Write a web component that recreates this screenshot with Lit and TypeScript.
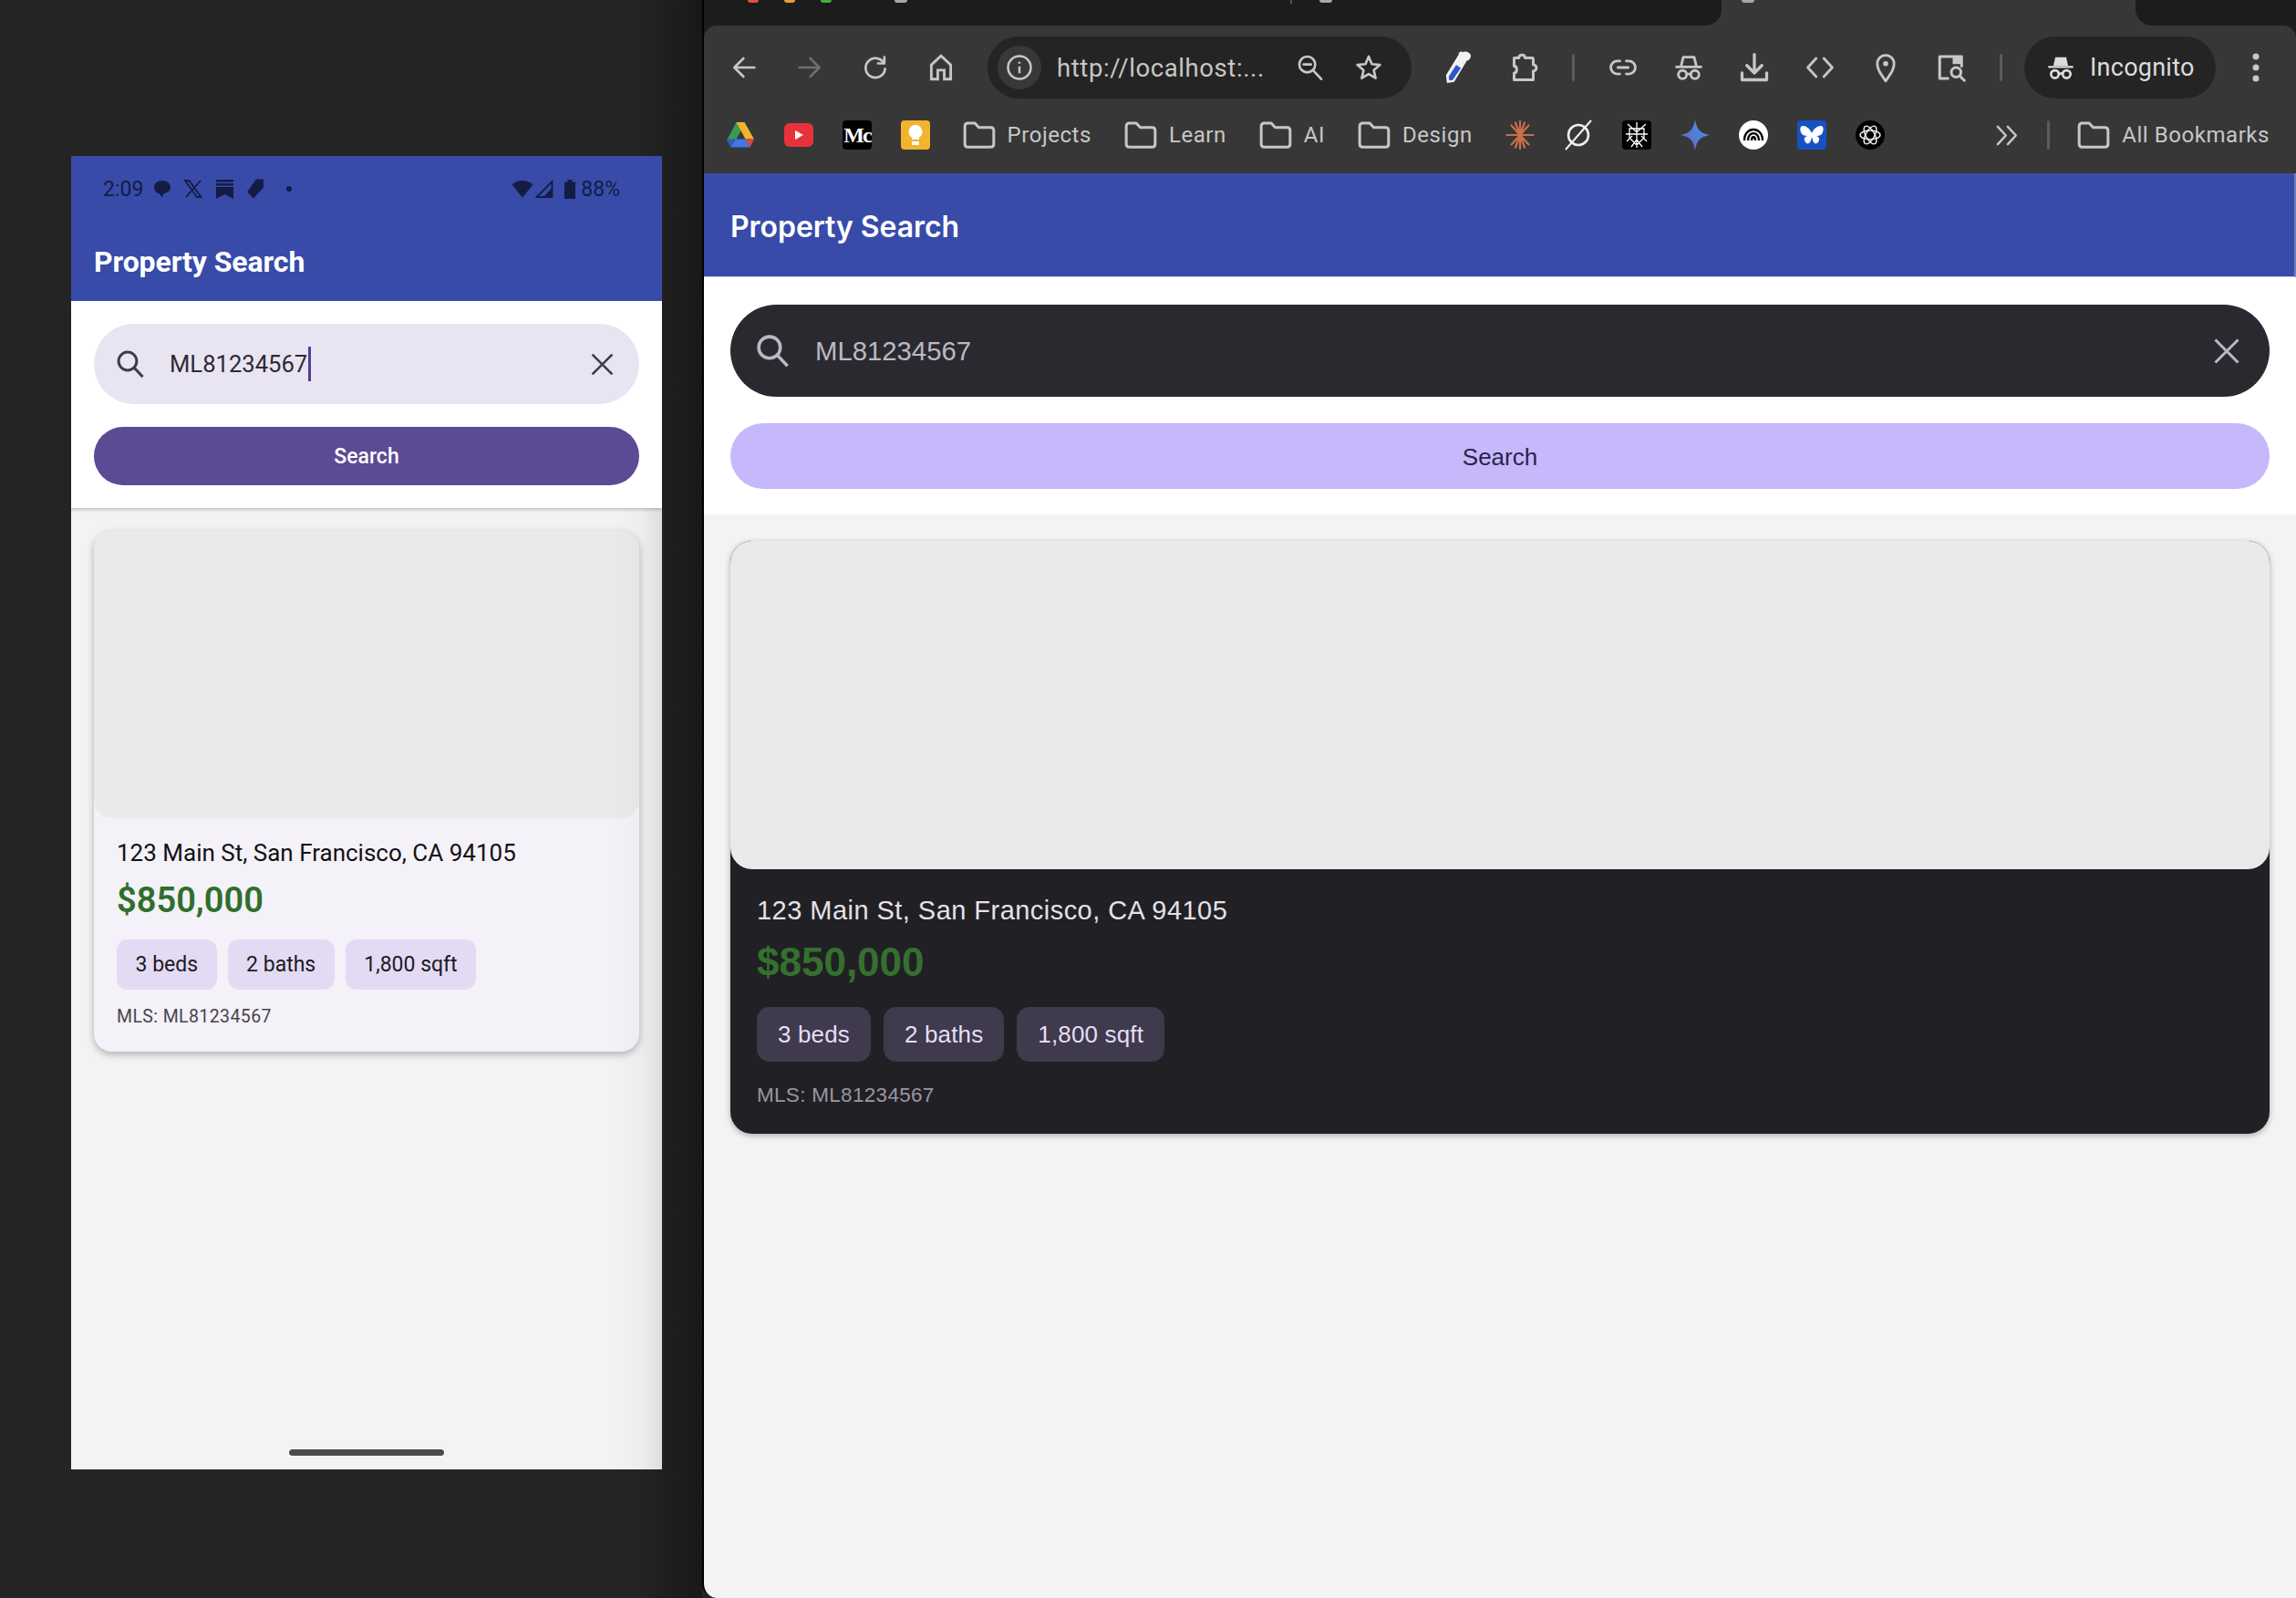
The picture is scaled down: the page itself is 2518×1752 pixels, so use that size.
import { LitElement, html, css, svg } from "lit";
import { customElement } from "lit/decorators.js";

const ic = (size: number, body: unknown, cls = "") =>
  html`<svg class=${cls} width=${size} height=${size} viewBox="0 0 24 24" fill="none" stroke="currentColor" stroke-width="2" stroke-linecap="round" stroke-linejoin="round">${body}</svg>`;

const searchGlyph = svg`<circle cx="10" cy="10" r="6.6"/><path d="M15 15l6 6.4" stroke-linecap="butt"/>`;
const closeGlyph = svg`<path d="M4.5 4.5l15 15M19.5 4.5l-15 15" stroke-linecap="butt" stroke-width="1.8"/>`;
const folderGlyph = svg`<path d="M2.5 6.2c0-1.2.8-2 2-2h4.6l2.6 2.8h7.800c1.200 0 2 .8 2 2v9c0 1.200-.8 2-2 2h-15c-1.200 0-2-.8-2-2z" stroke-width="1.800"/>`;

const chrome = {
  back: svg`<path d="M20.5 12H4.5M11.5 4.5L4 12l7.5 7.5"/>`,
  forward: svg`<path d="M3.5 12h16M12.5 4.5L20 12l-7.5 7.5"/>`,
  reload: svg`<path d="M19 8.4A8 8 0 1 0 20 13"/><path d="M19.4 3.4v5.2h-5.2"/>`,
  home: svg`<path d="M4.500 21V10L12 3l7.500 7v11h-5v-7h-5v7z" stroke-linejoin="miter"/>`,
  zoom: svg`<circle cx="9.500" cy="9.500" r="6.500"/><path d="M14.500 14.500l6.500 7M6.500 9.500h6"/>`,
  star: svg`<path d="M12 3l2.600 6.200 6.700.6-5.100 4.400 1.500 6.600L12 17.300 6.300 20.800l1.500-6.600-5.100-4.400 6.700-.6z"/>`,
  puzzle: svg`<path d="M5 5h3.500c0-3 4.500-3 4.500 0H18c.6 0 1 .4 1 1v4c3 0 3 4.500 0 4.500V21H5v-5c2.500 0 2.500-5 0-5z"/>`,
  link: svg`<path d="M9.500 7H7.500a5 5 0 0 0 0 10h2M14.500 7h2a5 5 0 0 1 0 10h-2M8 12h8"/>`,
  incog: svg`<path d="M2.500 11.500h19" stroke-width="1.800"/><path d="M6 10.500L7.500 3.500h9l1.500 7z" fill="currentColor" stroke="none"/><circle cx="7.200" cy="17.500" r="3.200"/><circle cx="16.800" cy="17.500" r="3.200"/><path d="M10.400 17h3.200"/>`,
  incogHollow: svg`<path d="M2.500 11.500h19"/><path d="M6.200 10.500L7.800 4h8.400l1.600 6.500" /><circle cx="7.200" cy="17.500" r="3.200"/><circle cx="16.800" cy="17.500" r="3.200"/><path d="M10.400 17h3.200"/>`,
  download: svg`<path d="M12 2.500v13M6.500 10.500L12 16l5.500-5.500" stroke-width="2.200"/><path d="M3 16v5h18v-5" stroke-width="2.200"/>`,
  code: svg`<path d="M9 5l-6.500 7L9 19M15 5l6.500 7L15 19"/>`,
  pin: svg`<path d="M12 22.500C8 16.500 5.500 13.500 5.500 9a6.500 6.500 0 0 1 13 0c0 4.500-2.500 7.500-6.500 13.500z"/><circle cx="12" cy="9" r="2" fill="currentColor" stroke="none"/>`,
  lens: svg`<path d="M9.500 20H3.500V4h16v7"/><path d="M13 4h6.500v5.500H13z" fill="currentColor" stroke="none"/><circle cx="15.500" cy="15.500" r="3.500"/><path d="M18 18l3.500 3.500"/>`,
};

@customElement("app-root")
export class AppRoot extends LitElement {
  static styles = css`
    :host { display: block; }
    * { box-sizing: border-box; }
    .root { display: flex; width: 2518px; height: 1752px; overflow: hidden; background: #242424; }

    /* phone */
    .phone-col { width: 770px; flex: none; padding: 171px 0 0 78px; background: linear-gradient(90deg, #242424 640px, #242424 700px, #181818 770px); }
    .phone { position: relative; width: 648px; height: 1440px; display: flex; flex-direction: column; background: #f3f3f3; font-family: Roboto, sans-serif; }
    .phone::after { content: ""; position: absolute; top: 160px; right: 0; bottom: 0; width: 60px; pointer-events: none; background: linear-gradient(90deg, rgba(0,0,0,0) 0, rgba(0,0,0,.02) 60%, rgba(0,0,0,.09) 100%); }
    .p-head { height: 159px; flex: none; background: #384ba8; }
    .status { height: 72px; display: flex; align-items: center; padding: 0 46px 0 35px; color: #141c44; font-size: 23px; }
    .st-left { display: flex; align-items: center; }
    .st-time { margin-right: 11px; }
    .st-left svg { margin-right: 13px; }
    .st-dot { width: 6px; height: 6px; border-radius: 50%; background: #141c44; margin-left: 11px; }
    .st-right { display: flex; align-items: center; margin-left: auto; gap: 2px; }
    .st-batt { margin-left: 9px; }
    .st-pct { margin-left: 3px; }
    .p-title { padding-left: 25px; font-size: 32px; line-height: 89px; font-weight: 700; letter-spacing: -.1px; color: #fff; }
    .p-top { flex: none; background: #fff; padding: 25px; display: flex; flex-direction: column; gap: 25px; box-shadow: 0 2px 3px rgba(0,0,0,.2); position: relative; z-index: 1; }
    .p-pill { height: 88px; border-radius: 44px; background: #e9e4f2; display: flex; align-items: center; padding: 0 23px 0 22px; color: #3f3c46; }
    .p-val { margin-left: 25px; font-size: 25.600px; color: #2d2a33; }
    .caret { width: 3px; height: 38px; margin-left: 1px; background: #4f3f94; }
    .p-pill .end { margin-left: auto; display: flex; }
    .p-btn { height: 64px; border-radius: 32px; background: #5b4a94; color: #fff; display: flex; align-items: center; justify-content: center; font-size: 23px; font-weight: 500; }
    .p-main { flex: 1; padding: 25px 25px 0; display: flex; flex-direction: column; }
    .p-card { border-radius: 20px; background: #f4f1f9; box-shadow: 0 3px 8px rgba(0,0,0,.28); height: 571px; }
    .p-img { height: 315px; border-radius: 20px; background: #eaeaea; }
    .p-body { padding: 19px 25px 0; }
    .p-addr { font-size: 26px; line-height: 38px; color: #111; }
    .p-price { margin-top: 7px; font-size: 38px; line-height: 52px; font-weight: 600; color: #2f6f2c; }
    .p-chips { display: flex; gap: 12px; margin-top: 17px; }
    .p-chip { height: 55px; display: flex; align-items: center; padding: 0 20.500px; border-radius: 12px; background: #e3daf4; font-size: 23px; color: #1c1a22; }
    .p-mls { margin-top: 16px; font-size: 19.500px; line-height: 28px; letter-spacing: .4px; color: #47444c; }
    .home-bar { margin: auto auto 15px; width: 170px; height: 7px; border-radius: 4px; background: #4b4b4b; box-shadow: 0 0 0 1px #fff; flex: none; }

    /* browser */
    .browser { flex: 1; display: flex; flex-direction: column; border-left: 2px solid #000; border-bottom-left-radius: 16px; overflow: hidden; background: #f3f3f3; font-family: "Liberation Sans", sans-serif; }
    .chrome { flex: none; height: 190px; background: #1c1c1c; font-family: Roboto, sans-serif; color: #c7c7c7; }
    .strip { height: 28px; display: flex; background: #373737; }
    .strip-l { width: 1116px; background: #1c1c1c; border-bottom-right-radius: 18px; display: flex; }
    .strip-r { margin-left: auto; width: 176px; background: #1c1c1c; border-bottom-left-radius: 18px; }
    .lights { display: flex; gap: 28px; margin-left: 48px; }
    .light { width: 12px; height: 3px; border-radius: 0 0 6px 6px; }
    .l-red { background: #e0503f; }
    .l-amber { background: #dfa02c; }
    .l-green { background: #3fb03c; }
    .frag { width: 14px; height: 3px; border-radius: 0 0 7px 7px; background: #a8a8a8; flex: none; }
    .frag-a { margin-left: 69px; }
    .frag-sep { width: 2px; height: 4px; background: #555; margin-left: 420px; flex: none; }
    .frag-b { margin-left: 30px; }
    .frag-tab { margin-left: 22px; }
    .tool-wrap { height: 162px; background: #373737; border-radius: 14px 14px 0 0; }
    .tools { height: 92px; display: flex; align-items: center; padding-left: 8px; }
    .slot { width: 72px; height: 72px; flex: none; display: flex; align-items: center; justify-content: center; }
    .dim { color: #6e6e6e; }
    .url { width: 465px; height: 68px; margin: 0 15px; border-radius: 34px; background: #242424; display: flex; align-items: center; padding-left: 11px; flex: none; }
    .url-info { width: 48px; height: 48px; border-radius: 50%; background: #383838; display: flex; align-items: center; justify-content: center; margin-right: 17px; }
    .url-t { font-size: 27.500px; letter-spacing: .6px; width: 228px; white-space: nowrap; padding-top: 1px; }
    .url-ic { display: flex; margin-left: 34px; gap: 32px; }
    .vsep-box { width: 37px; flex: none; display: flex; justify-content: center; }
    .vsep-box.b { width: 36px; }
    .vsep { width: 3px; height: 30px; border-radius: 2px; background: #5c5c5c; }
    .inc { width: 210px; height: 68px; margin-left: 8px; border-radius: 34px; background: #242424; display: flex; align-items: center; padding-left: 24px; gap: 16px; font-size: 27px; letter-spacing: .25px; color: #dcdcdc; flex: none; }
    .kebab { margin-left: 8px; }
    .marks { height: 56px; display: flex; align-items: center; padding-left: 8px; font-size: 24px; letter-spacing: .55px; }
    .m-slot { width: 64px; height: 54px; flex: none; display: flex; align-items: center; justify-content: center; }
    .m-sq { width: 32px; height: 32px; border-radius: 4px; display: flex; align-items: center; justify-content: center; overflow: hidden; }
    .m-medium { background: #000; color: #fff; font: 700 24px "Liberation Serif", serif; letter-spacing: -2px; white-space: nowrap; }
    .m-yt { background: #e8323a; height: 26px; border-radius: 6px; }
    .m-keep { background: #f2b32e; }
    .m-black { background: #000; }
    .m-blue { background: #1652c4; }
    .m-folder { display: flex; align-items: center; gap: 11px; flex: none; margin-right: 34px; }
    .m-first { margin-left: 17.500px; }
    .m-last { margin-right: 20px; }
    .m-right { margin-left: auto; display: flex; align-items: center; padding-right: 29px; }
    .m-sep { width: 3px; height: 32px; border-radius: 2px; background: #5c5c5c; margin: 0 28px; }
    .m-right .m-folder { margin-right: 0; }
    .page { flex: 1; display: flex; flex-direction: column; }
    .b-head { flex: none; height: 114px; background: #384ba8; border-bottom: 1px solid #d4d4dc; border-right: 2px solid #6f7cc0; padding: 3px 0 0 29px; display: flex; align-items: center; font-family: Inter, sans-serif; font-size: 32px; font-weight: 600; letter-spacing: -.05px; color: #fff; }
    .b-top { flex: none; background: #fff; padding: 30px 29px 28px; display: flex; flex-direction: column; gap: 29px; }
    .b-pill { height: 101px; border-radius: 51px; background: #2b2930; display: flex; align-items: center; padding: 0 27px 0 25px; color: #bcb8c2; }
    .b-val { margin-left: 25px; font-size: 29.300px; }
    .b-pill .end { margin-left: auto; display: flex; }
    .b-btn { height: 72px; border-radius: 36px; background: #c6b8fa; color: #2a2350; display: flex; align-items: center; justify-content: center; font-size: 26px; padding-top: 3px; }
    .b-main { flex: 1; padding: 29px 29px 0; }
    .b-card { height: 650px; border-radius: 24px; background: #212025; box-shadow: 0 2px 6px rgba(0,0,0,.3); }
    .b-img { height: 360px; border-radius: 24px; background: #eaeaea; }
    .b-body { padding: 27px 29px 0; }
    .b-addr { font-size: 29px; line-height: 36px; color: #e6e1e6; letter-spacing: .46px; }
    .b-price { margin-top: 11px; font-size: 44px; line-height: 56px; font-weight: 700; color: #35702f; }
    .b-chips { display: flex; gap: 14px; margin-top: 21px; }
    .b-chip { height: 60px; display: flex; align-items: center; padding: 0 23px; border-radius: 14px; background: #3f3a4c; font-size: 26px; letter-spacing: .15px; color: #e6def6; }
    .b-mls { margin-top: 24px; font-size: 22.500px; line-height: 26px; letter-spacing: .3px; color: #9a97a0; }
  `;

  private chips(cls: string) {
    return ["3 beds", "2 baths", "1,800 sqft"].map((t) => html`<div class=${cls}>${t}</div>`);
  }

  private folder(name: string, cls = "") {
    return html`<div class="m-folder ${cls}">${ic(40, folderGlyph)}<span>${name}</span></div>`;
  }

  private statusBar() {
    return html`<div class="status">
      <div class="st-left">
        <span class="st-time">2:09</span>
        <svg width="20" height="20" viewBox="0 0 20 20" fill="currentColor"><path d="M10 1C5 1 1 4 1 8.500c0 3.500 2.500 6 5.500 6.800L10 19.500l1.500-4.200C15.500 14.500 19 12 19 8.500 19 4 15 1 10 1z"/></svg>
        <svg width="22" height="20" viewBox="0 0 22 20" fill="none" stroke="currentColor" stroke-width="1.800"><path d="M2 1h4.500l13 18H15zM19 1L3 19"/></svg>
        <svg width="21" height="21" viewBox="0 0 21 21" fill="currentColor"><path d="M1 0h19v2.400H1zM1 4h19v2.400H1zM1 8h19v13l-9.500-5L1 21z"/></svg>
        <svg width="20" height="22" viewBox="0 0 20 22" fill="currentColor"><path d="M11 .5h8v9L8 21.500 1 14.500z"/></svg>
        <span class="st-dot"></span>
      </div>
      <div class="st-right">
        <svg width="24" height="20" viewBox="0 0 24 20" fill="currentColor"><path d="M12 19.500L.5 5.500C6.500-.5 17.500-.5 23.500 5.500z"/></svg>
        <svg width="20" height="20" viewBox="0 0 20 20" fill="none" stroke="currentColor" stroke-width="1.800"><path d="M18.500 2v17H1.500z"/><path d="M18.500 9v10H9z" fill="currentColor" stroke="none"/></svg>
        <svg class="st-batt" width="14" height="21" viewBox="0 0 14 21" fill="currentColor"><path d="M4.500 0h5v2.500H13V21H1V2.500h3.500z"/></svg>
        <span class="st-pct">88%</span>
      </div>
    </div>`;
  }

  private slot(body: unknown, size = 32, cls = "") {
    return html`<div class="slot ${cls}">${ic(size, body)}</div>`;
  }

  render() {
    return html`<div class="root">
      <div class="phone-col">
        <div class="phone">
          <div class="p-head">
            ${this.statusBar()}
            <div class="p-title">Property Search</div>
          </div>
          <div class="p-top">
            <div class="p-pill">
              ${ic(36, searchGlyph)}
              <span class="p-val">ML81234567</span><span class="caret"></span>
              <span class="end">${ic(35, closeGlyph)}</span>
            </div>
            <div class="p-btn">Search</div>
          </div>
          <div class="p-main">
            <div class="p-card">
              <div class="p-img"></div>
              <div class="p-body">
                <div class="p-addr">123 Main St, San Francisco, CA 94105</div>
                <div class="p-price">$850,000</div>
                <div class="p-chips">${this.chips("p-chip")}</div>
                <div class="p-mls">MLS: ML81234567</div>
              </div>
            </div>
            <div class="home-bar"></div>
          </div>
        </div>
      </div>

      <div class="browser">
        <div class="chrome">
          <div class="strip">
            <div class="strip-l">
              <div class="lights">
                <span class="light l-red"></span>
                <span class="light l-amber"></span>
                <span class="light l-green"></span>
              </div>
              <span class="frag frag-a"></span>
              <span class="frag-sep"></span>
              <span class="frag frag-b"></span>
            </div>
            <span class="frag frag-tab"></span>
            <div class="strip-r"></div>
          </div>
          <div class="tool-wrap">
            <div class="tools">
              ${this.slot(chrome.back)}
              ${this.slot(chrome.forward, 32, "dim")}
              ${this.slot(chrome.reload)}
              ${this.slot(chrome.home, 34)}
              <div class="url">
                <div class="url-info">
                  <svg width="30" height="30" viewBox="0 0 24 24" fill="none" stroke="currentColor" stroke-width="2"><circle cx="12" cy="12" r="10"/><path d="M12 11v6M12 7v1.500"/></svg>
                </div>
                <span class="url-t">http://localhost:...</span>
                <div class="url-ic">${ic(32, chrome.zoom)}${ic(32, chrome.star)}</div>
              </div>
              <div class="slot">
                <svg width="34" height="38" viewBox="0 0 32 36"><path d="M27 2.500c2.500 1.500 3 4 1.500 6l-2 2.500-1-.6L12 33 4.500 34 3.500 26 17 4l-.8-.8 3-2 2 1c1.500-1 3.800-1 5.800.3z" fill="#f2f2f2"/><path d="M14 15.500l5 3L10.500 31 6.800 31.500 6.300 27.500z" fill="#2c58c8"/></svg>
              </div>
              ${this.slot(chrome.puzzle, 36)}
              <div class="vsep-box"><span class="vsep"></span></div>
              ${this.slot(chrome.link, 34)}
              ${this.slot(chrome.incogHollow, 34)}
              ${this.slot(chrome.download, 36)}
              ${this.slot(chrome.code, 34)}
              ${this.slot(chrome.pin, 34)}
              ${this.slot(chrome.lens, 36)}
              <div class="vsep-box b"><span class="vsep"></span></div>
              <div class="inc">${ic(32, chrome.incog)}<span>Incognito</span></div>
              <div class="slot kebab">
                <svg width="10" height="32" viewBox="0 0 10 32" fill="currentColor"><circle cx="5" cy="4" r="3.500"/><circle cx="5" cy="16" r="3.500"/><circle cx="5" cy="28" r="3.500"/></svg>
              </div>
            </div>
            <div class="marks">
              <div class="m-slot">
                <svg width="32" height="32" viewBox="0 0 32 32"><path d="M11.500 2h9L15 14.500 10.500 22H1z" fill="#3c9a4f"/><path d="M11.500 2h9l10.500 18.500h-9.500z" fill="#f2b32c"/><path d="M1 20.500h30l-4.800 9H5.800z" fill="#3f78e0"/><path d="M1 20.500h10l-5.200 9z" fill="#2b62b8"/><path d="M21.500 20.500H31l-4.800 9z" fill="#d8493a"/></svg>
              </div>
              <div class="m-slot">
                <div class="m-sq m-yt"><svg width="12" height="12" viewBox="0 0 12 12" fill="#fff"><path d="M2 1l9 5-9 5z"/></svg></div>
              </div>
              <div class="m-slot"><div class="m-sq m-medium">Mc</div></div>
              <div class="m-slot">
                <div class="m-sq m-keep">
                  <svg width="20" height="24" viewBox="0 0 20 24" fill="#fff"><path d="M10 1a7.500 7.500 0 0 0-4 13.800V17h8v-2.200A7.500 7.500 0 0 0 10 1zM6 19h8v4H6z"/></svg>
                </div>
              </div>
              ${this.folder("Projects", "m-first")}
              ${this.folder("Learn")}
              ${this.folder("AI")}
              ${this.folder("Design", "m-last")}
              <div class="m-slot">
                <svg width="32" height="32" viewBox="0 0 32 32" stroke="#c96f4a" stroke-width="2.200" stroke-linecap="round"><path d="M16 1v30M1.500 16h29M6.500 5.500l19 21M25.500 5.500l-19 21M11 2.500l10 27M21 2.500l-10 27"/></svg>
              </div>
              <div class="m-slot">
                <svg width="34" height="34" viewBox="0 0 34 34" fill="none" stroke="#eee" stroke-width="2.600"><circle cx="17" cy="17" r="11"/><path d="M31 1L3 33" stroke-width="2"/></svg>
              </div>
              <div class="m-slot">
                <div class="m-sq m-black">
                  <svg width="28" height="30" viewBox="0 0 28 30" fill="none" stroke="#fff" stroke-width="1.300"><path d="M14 1v28M4 3l10 9 10-9M2 14h24M6 8h16v10l-8 8-8-8zM3 22l6-6M25 22l-6-6M8 28l6-8 6 8"/></svg>
                </div>
              </div>
              <div class="m-slot">
                <svg width="32" height="34" viewBox="0 0 32 34"><defs><linearGradient id="gem" x1="0" y1="1" x2="1" y2="0"><stop offset="0" stop-color="#7a5fc0"/><stop offset=".6" stop-color="#4a84dc"/><stop offset="1" stop-color="#4c9be8"/></linearGradient></defs><path d="M16 0c1.500 10 5 15 16 17-11 2-14.500 7-16 17-1.500-10-5-15-16-17C11 15 14.500 10 16 0z" fill="url(#gem)"/></svg>
              </div>
              <div class="m-slot">
                <svg width="32" height="32" viewBox="0 0 32 32" fill="none"><circle cx="16" cy="16" r="16" fill="#fff"/><path d="M6 22c0-16 20-16 20 0M10 22c0-10.500 12-10.500 12 0M14 22c0-5 4-5 4 0" stroke="#000" stroke-width="2.400"/></svg>
              </div>
              <div class="m-slot">
                <div class="m-sq m-blue">
                  <svg width="26" height="26" viewBox="0 0 26 26" fill="#fff"><path d="M13 11C11 6 7 3 3 3 0 3 0 7 1 10c1 3 4 4 7 4-3 1-4 3-2.500 6 1.500 3 4 3 5.500 1 1-1.500 1.500-4 2-6 .5 2 1 4.500 2 6 1.500 2 4 2 5.500-1 1.500-3 .5-5-2.500-6 3 0 6-1 7-4 1-3 1-7-2-7-4 0-8 3-10 8z"/></svg>
                </div>
              </div>
              <div class="m-slot">
                <svg width="32" height="32" viewBox="0 0 32 32" fill="none"><circle cx="16" cy="16" r="16" fill="#000"/><g stroke="#fff" stroke-width="1.300"><ellipse cx="16" cy="16" rx="11" ry="4.800"/><ellipse cx="16" cy="16" rx="11" ry="4.800" transform="rotate(60 16 16)"/><ellipse cx="16" cy="16" rx="11" ry="4.800" transform="rotate(120 16 16)"/></g></svg>
              </div>
              <div class="m-right">
                ${ic(33, svg`<path d="M5 5l6.500 7L5 19M13 5l6.500 7-6.500 7" stroke-width="1.800"/>`)}
                <span class="m-sep"></span>
                ${this.folder("All Bookmarks")}
              </div>
            </div>
          </div>
        </div>

        <div class="page">
          <div class="b-head">Property Search</div>
          <div class="b-top">
            <div class="b-pill">
              ${ic(43, searchGlyph)}
              <span class="b-val">ML81234567</span>
              <span class="end">${ic(40, closeGlyph)}</span>
            </div>
            <div class="b-btn">Search</div>
          </div>
          <div class="b-main">
            <div class="b-card">
              <div class="b-img"></div>
              <div class="b-body">
                <div class="b-addr">123 Main St, San Francisco, CA 94105</div>
                <div class="b-price">$850,000</div>
                <div class="b-chips">${this.chips("b-chip")}</div>
                <div class="b-mls">MLS: ML81234567</div>
              </div>
            </div>
          </div>
        </div>
      </div>
    </div>`;
  }
}
